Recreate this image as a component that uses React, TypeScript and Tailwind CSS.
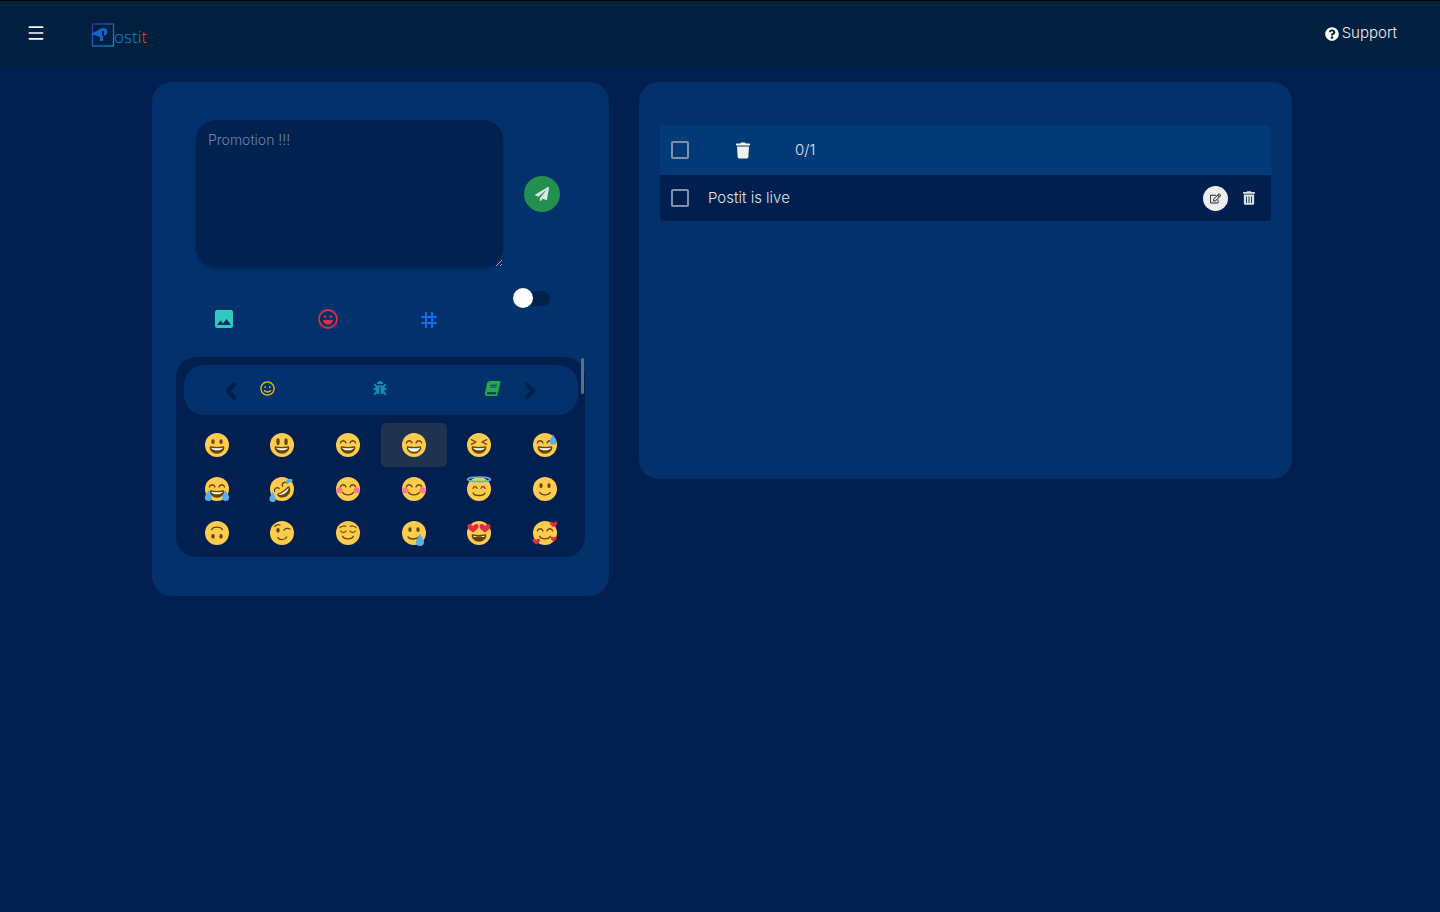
import { ChevronLeft, ChevronRight, Menu } from "lucide-react"
import { FaBug, FaBook, FaPaperPlane, FaQuestionCircle, FaRegEdit, FaRegSmile, FaTrash, FaTrashAlt } from "react-icons/fa"
import { MdImage, MdTag } from "react-icons/md"
import type { ReactNode } from "react"

const INK = "#664500"

function RoundEyes({ tall = false }: { tall?: boolean }) {
  return (
    <>
      <ellipse cx="12" cy="13" rx="2.5" ry={tall ? 5 : 3.5} fill={INK} />
      <ellipse cx="24" cy="13" rx="2.5" ry={tall ? 5 : 3.5} fill={INK} />
    </>
  )
}

function ArcEyes() {
  return (
    <path d="M6.5 15c1.2-4.5 7.3-4.5 8.5 0M21 15c1.2-4.5 7.3-4.5 8.5 0" fill="none" stroke={INK} strokeWidth="1.9" strokeLinecap="round" />
  )
}

function BigMouth({ full = false }: { full?: boolean }) {
  return (
    <>
      <path d="M18 21c-3.6 0-5.9-.4-9-1-.7-.1-2 0-2 2 0 4 4.6 9 11 9s11-5 11-9c0-2-1.3-2.1-2-2-3.1.6-5.4 1-9 1z" fill={INK} />
      {full ? (
        <path d="M9 22s3 1 9 1 9-1 9-1-1 6-9 6-9-6-9-6z" fill="#fff" />
      ) : (
        <path d="M9 22s3 1 9 1 9-1 9-1-2 4-9 4-9-4-9-4z" fill="#fff" />
      )}
    </>
  )
}

function SmallSmile() {
  return <path d="M10 23c2 5 14 5 16 0" fill="none" stroke={INK} strokeWidth="2" strokeLinecap="round" />
}

function Heart({ x, y, s = 1 }: { x: number; y: number; s?: number }) {
  return (
    <path
      transform={`translate(${x} ${y}) scale(${s})`}
      d="M0 3.4C-1-1-6-1.6-7.4 1.6-8.8 5-4 8.4 0 11 4 8.4 8.8 5 7.4 1.6 6-1.6 1-1 0 3.4z"
      fill="#DD2E44"
    />
  )
}

function Drop({ x, y, s = 1 }: { x: number; y: number; s?: number }) {
  return <path transform={`translate(${x} ${y}) scale(${s})`} d="M0-6C-1-2-4 0-4 3a4 4 0 0 0 8 0C4 0 1-2 0-6z" fill="#5DADEC" />
}

const emojis: ReactNode[] = [
  <><RoundEyes /><BigMouth /></>,
  <><RoundEyes tall /><BigMouth /></>,
  <><ArcEyes /><BigMouth /></>,
  <><ArcEyes /><BigMouth full /></>,
  <>
    <path d="M6.5 10l7 3.5-7 3.5M29.5 10l-7 3.5 7 3.5" fill="none" stroke={INK} strokeWidth="1.9" strokeLinecap="round" strokeLinejoin="round" />
    <BigMouth />
  </>,
  <><ArcEyes /><BigMouth /><Drop x={30} y={9} s={1.25} /></>,
  <>
    <ArcEyes /><BigMouth />
    <Drop x={5} y={27} s={1.3} /><Drop x={31} y={27} s={1.3} />
  </>,
  <>
    <g transform="rotate(-35 18 18)">
      <ArcEyes /><BigMouth />
    </g>
    <Drop x={4} y={29} s={1.2} />
    <path d="M32 3c-3 0-7 1-8 3s1 4 4 3c3-.6 6-3 6-4s-1-2-2-2z" fill="#5DADEC" />
  </>,
  <>
    <ArcEyes />
    <circle cx="5" cy="20" r="4.5" fill="#FF7892" /><circle cx="31" cy="20" r="4.5" fill="#FF7892" />
    <SmallSmile />
  </>,
  <>
    <ArcEyes />
    <circle cx="5" cy="20" r="4.5" fill="#FF7892" /><circle cx="31" cy="20" r="4.5" fill="#FF7892" />
    <SmallSmile />
  </>,
  <>
    <path d="M9 17c1-3.500 5-3.500 6 0M21 17c1-3.500 5-3.500 6 0" fill="none" stroke={INK} strokeWidth="1.9" strokeLinecap="round" />
    <path d="M9 24c2 5 16 5 18 0" fill="none" stroke={INK} strokeWidth="2" strokeLinecap="round" />
    <ellipse cx="18" cy="3.500" rx="17" ry="3.500" fill="none" stroke="#5DADEC" strokeWidth="2.500" />
  </>,
  <><RoundEyes /><SmallSmile /></>,
  <g transform="rotate(180 18 18)"><RoundEyes /><SmallSmile /></g>,
  <>
    <ellipse cx="12" cy="14" rx="2.5" ry="3.5" fill={INK} />
    <path d="M21 14c1.500-3 6-4 9-2M7 8c2-2 6-3 8-2" fill="none" stroke={INK} strokeWidth="1.9" strokeLinecap="round" />
    <path d="M12 25c2 4 10 4 13-1" fill="none" stroke={INK} strokeWidth="2" strokeLinecap="round" />
  </>,
  <>
    <path d="M7 15c2 3 6 3 8 0M21 15c2 3 6 3 8 0M6 10c2-3 7-3 9-2M21 8c2-1 7-1 9 2" fill="none" stroke={INK} strokeWidth="1.8" strokeLinecap="round" />
    <SmallSmile />
  </>,
  <>
    <RoundEyes />
    <path d="M9 24c3 4 12 4 16 0" fill="none" stroke={INK} strokeWidth="2" strokeLinecap="round" />
    <Drop x={27} y={27} s={1.5} />
  </>,
  <>
    <BigMouth />
    <path d="M11 25c2 3 12 3 14 0-1-3-13-3-14 0z" fill={INK} />
    <Heart x={9} y={5} s={1.1} /><Heart x={27} y={5} s={1.1} />
  </>,
  <>
    <ArcEyes /><SmallSmile />
    <Heart x={31} y={1} s={0.75} /><Heart x={5} y={27} s={0.75} /><Heart x={31} y={24} s={0.6} />
  </>,
]

function Emoji({ children }: { children: ReactNode }) {
  return (
    <svg viewBox="0 0 36 36" className="w-6 h-6 overflow-visible">
      <circle cx="18" cy="18" r="18" fill="#FFCC4D" />
      {children}
    </svg>
  )
}

function Checkbox() {
  return <span className="block w-[18px] h-[18px] rounded-[2px] border-2 border-[#7f93ad]" />
}

function Logo() {
  return (
    <div className="flex items-end">
      <svg viewBox="0 0 24 24" className="w-[24px] h-[24px]">
        <defs>
          <linearGradient id="logo" x1="0" y1="0" x2="1" y2="1">
            <stop offset="0" stopColor="#3a2fa8" />
            <stop offset="1" stopColor="#0a8fd8" />
          </linearGradient>
        </defs>
        <rect x="1.500" y="1" width="21" height="22" fill="none" stroke="url(#logo)" strokeWidth="1.300" />
        <path d="M0 11l9-5c2-1.500 6-1.500 7 1 1 3-1 6-4 6v5H9v-4z" fill="#1565c8" />
        <rect x="11" y="8" width="2" height="5" fill="#01203f" />
      </svg>
      <span className="text-[17px] leading-[20px] -ml-px text-[#0a86d8] font-['Open_Sans',sans-serif]">
        ost<span className="text-[#f0470f]">it</span>
      </span>
    </div>
  )
}

export default function App() {
  return (
    <div className="min-h-[912px] bg-[#012050] font-['Inter',sans-serif] font-light border-t border-black">
      <header className="h-[65px] bg-[#011f3f] flex items-center pl-[26px] pr-[43px] text-white">
        <Menu className="w-[20px] h-[20px] -mt-[1px]" strokeWidth={2} />
        <div className="ml-[45px] mt-[2px]">
          <Logo />
        </div>
        <div className="ml-auto flex items-center gap-[3px] text-[15px] text-[#e8edf3]">
          <FaQuestionCircle className="w-[14px] h-[14px] text-white" />
          <span>Support</span>
        </div>
      </header>

      <main className="flex items-start gap-[30px] pl-[152px] pt-[16px]">
        <section className="w-[457px] h-[514px] rounded-[20px] bg-[#02316b] pt-[38px] px-[24px]">
          <div className="flex items-center pl-[20px]">
            <textarea
              placeholder="Promotion !!!"
              className="w-[307px] h-[147px] rounded-[20px] bg-[#012150] px-[12px] py-[10px] text-[14px] leading-[20px] outline-none placeholder:text-[#6d86a8] shadow-[0_2px_3px_rgba(0,0,0,0.15)]"
            />
            <button className="ml-[21px] w-[36px] h-[36px] rounded-full bg-[#22914f] flex items-center justify-center">
              <FaPaperPlane className="w-[14px] h-[14px] text-[#dfe7ee]" />
            </button>
          </div>

          <div className="relative h-[90px] flex items-center">
            <MdImage className="absolute left-[36px] top-[40px] w-[24px] h-[24px] text-[#2ecabb]" />
            <svg viewBox="0 0 20 20" className="absolute left-[142px] top-[42px] w-[20px] h-[20px] text-[#dc2f45]">
              <circle cx="10" cy="10" r="9" fill="none" stroke="currentColor" strokeWidth="1.800" />
              <circle cx="7" cy="7.500" r="1.300" fill="currentColor" />
              <circle cx="13" cy="7.500" r="1.300" fill="currentColor" />
              <path d="M5 11h10c0 3-2.500 4.500-5 4.500S5 14 5 11z" fill="currentColor" />
            </svg>
            <MdTag className="absolute left-[241px] top-[41px] w-[24px] h-[24px] text-[#0a6fe8]" />
            <div className="absolute left-[338px] top-[24px] w-[36px] h-[15px] rounded-full bg-[#01224d]">
              <span className="absolute -left-[1px] -top-[3px] w-[20px] h-[20px] rounded-full bg-white" />
            </div>
          </div>

          <div className="relative w-[409px] h-[200px] rounded-[20px] bg-[#012050] pt-[8px] pl-[8px]">
            <div className="relative w-[394px] h-[50px] rounded-[20px] bg-[#02316b] flex items-center">
              <ChevronLeft className="absolute left-[34px] top-[13px] w-[26px] h-[26px] text-[#011f4b]" strokeWidth={4} />
              <FaRegSmile className="absolute left-[76px] top-[16px] w-[15px] h-[15px] text-[#e8b71c]" />
              <FaBug className="absolute left-[189px] top-[16px] w-[14px] h-[14px] text-[#1190b0]" />
              <FaBook className="absolute left-[301px] top-[16px] w-[15px] h-[15px] text-[#27a84a] -skew-x-12" />
              <ChevronRight className="absolute left-[333px] top-[13px] w-[26px] h-[26px] text-[#011f4b]" strokeWidth={4} />
            </div>
            <span className="absolute right-[1px] top-[1px] w-[3px] h-[36px] rounded-full bg-[#5d6f88]" />
            <div className="grid grid-cols-6 w-[394px] mt-[8px]">
              {emojis.map((face, i) => (
                <div key={i} className={`h-[44px] flex items-center justify-center rounded-[5px] ${i === 3 ? "bg-[#1f3350]" : ""}`}>
                  <Emoji>{face}</Emoji>
                </div>
              ))}
            </div>
          </div>
        </section>

        <section className="w-[653px] h-[397px] rounded-[20px] bg-[#02316b] pt-[43px] px-[21px] text-[#dfe5ec]">
          <div className="h-[50px] rounded-t-[4px] bg-[#023a78] flex items-center pl-[11px]">
            <Checkbox />
            <FaTrash className="ml-[47px] w-[14px] h-[17px] text-[#f2f2f2]" />
            <span className="ml-[45px] text-[15px]">0/1</span>
          </div>
          <div className="h-[46px] rounded-b-[4px] bg-[#011f4e] flex items-center pl-[11px] pr-[16px]">
            <Checkbox />
            <span className="ml-[19px] text-[15px]">Postit is live</span>
            <button className="ml-auto w-[25px] h-[25px] rounded-full bg-[#eeeeee] flex items-center justify-center">
              <FaRegEdit className="w-[11px] h-[11px] text-[#23272b]" />
            </button>
            <FaTrashAlt className="ml-[15px] w-[12px] h-[14px] text-[#dbe3ea]" />
          </div>
        </section>
      </main>
    </div>
  )
}
